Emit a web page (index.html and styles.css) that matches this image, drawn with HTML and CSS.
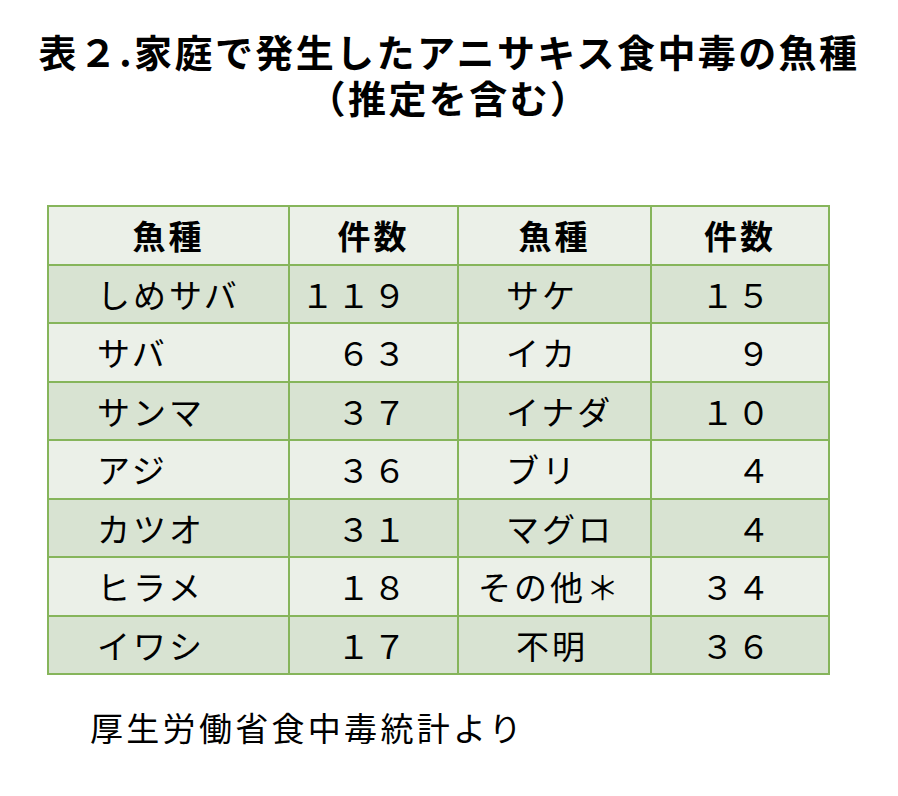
FILE: index.html
```html
<!DOCTYPE html>
<html lang="ja">
<head>
<meta charset="utf-8">
<link rel="stylesheet" href="styles.css">
</head>
<body>
<div class="page">
  <h1 class="title"><span class="line">表２.家庭で発生したアニサキス食中毒の魚種</span><span class="line">（推定を含む）</span></h1>
  <table class="fish">
    <thead>
      <tr><th>魚種</th><th>件数</th><th>魚種</th><th>件数</th></tr>
    </thead>
    <tbody>
      <tr class="band"><td class="n1">しめサバ</td><td class="c1">１１９</td><td class="n2">サケ</td><td class="c2">１５</td></tr>
      <tr><td class="n1">サバ</td><td class="c1">６３</td><td class="n2">イカ</td><td class="c2">９</td></tr>
      <tr class="band"><td class="n1">サンマ</td><td class="c1">３７</td><td class="n2">イナダ</td><td class="c2">１０</td></tr>
      <tr><td class="n1">アジ</td><td class="c1">３６</td><td class="n2">ブリ</td><td class="c2">４</td></tr>
      <tr class="band"><td class="n1">カツオ</td><td class="c1">３１</td><td class="n2">マグロ</td><td class="c2">４</td></tr>
      <tr><td class="n1">ヒラメ</td><td class="c1">１８</td><td class="n2 wide">その他＊</td><td class="c2">３４</td></tr>
      <tr class="band"><td class="n1">イワシ</td><td class="c1">１７</td><td class="n2 inset">不明</td><td class="c2">３６</td></tr>
    </tbody>
  </table>
  <p class="source">厚生労働省食中毒統計より</p>
</div>
</body>
</html>
```
FILE: styles.css
```css
html, body {
  margin: 0;
  padding: 0;
  background: #ffffff;
}
.page {
  width: 898px;
  font-family: "Noto Sans CJK JP", "Noto Sans", sans-serif;
  color: #000;
}
.title {
  margin: 28px 0 0 0;
  text-align: center;
  font-size: 38px;
  line-height: 46px;
  font-weight: 700;
  letter-spacing: 2.4px;
}
.title .line {
  display: block;
}
.fish {
  margin: 85px 0 0 47px;
  border-collapse: collapse;
  border: 2px solid #86b55b;
}
.fish th, .fish td {
  border: 2px solid #86b55b;
  height: 56.5px;
  padding: 0;
  font-size: 33px;
  line-height: 40px;
  letter-spacing: 3px;
  background: #ebf0e8;
}
.fish th {
  font-weight: 700;
  text-align: center;
}
.fish th:nth-child(1) { width: 239px; }
.fish th:nth-child(2) { width: 167px; }
.fish th:nth-child(3) { width: 191px; }
.fish th:nth-child(4) { width: 176px; }
.fish td { font-weight: 400; }
.fish tr.band td { background: #d8e3d2; }
.n1 { text-align: left; padding-left: 48px !important; }
.c1 { text-align: right; padding-right: 48px !important; }
.n2 { text-align: left; padding-left: 47px !important; }
.n2.wide { padding-left: 19px !important; }
.n2.inset { padding-left: 57px !important; }
.c2 { text-align: right; padding-right: 55px !important; }
.source {
  margin: 32px 0 0 90px;
  font-size: 33px;
  line-height: 40px;
  letter-spacing: 3.3px;
}
```
